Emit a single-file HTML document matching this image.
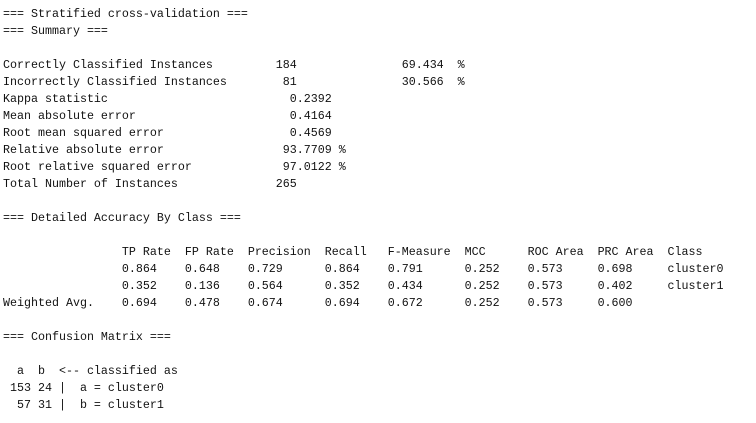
<!DOCTYPE html><html><head><style>
body{margin:0;background:#fff;width:756px;height:423px;overflow:hidden}
pre{margin:0;position:absolute;left:3px;top:6px;font-family:"Liberation Mono",monospace;font-size:11.667px;line-height:17px;color:#111}
</style></head><body><pre>=== Stratified cross-validation ===
=== Summary ===

Correctly Classified Instances         184               69.434  %
Incorrectly Classified Instances        81               30.566  %
Kappa statistic                          0.2392
Mean absolute error                      0.4164
Root mean squared error                  0.4569
Relative absolute error                 93.7709 %
Root relative squared error             97.0122 %
Total Number of Instances              265     

=== Detailed Accuracy By Class ===

                 TP Rate  FP Rate  Precision  Recall   F-Measure  MCC      ROC Area  PRC Area  Class
                 0.864    0.648    0.729      0.864    0.791      0.252    0.573     0.698     cluster0
                 0.352    0.136    0.564      0.352    0.434      0.252    0.573     0.402     cluster1
Weighted Avg.    0.694    0.478    0.674      0.694    0.672      0.252    0.573     0.600     

=== Confusion Matrix ===

  a  b  &lt;-- classified as
 153 24 |  a = cluster0
  57 31 |  b = cluster1
</pre></body></html>
